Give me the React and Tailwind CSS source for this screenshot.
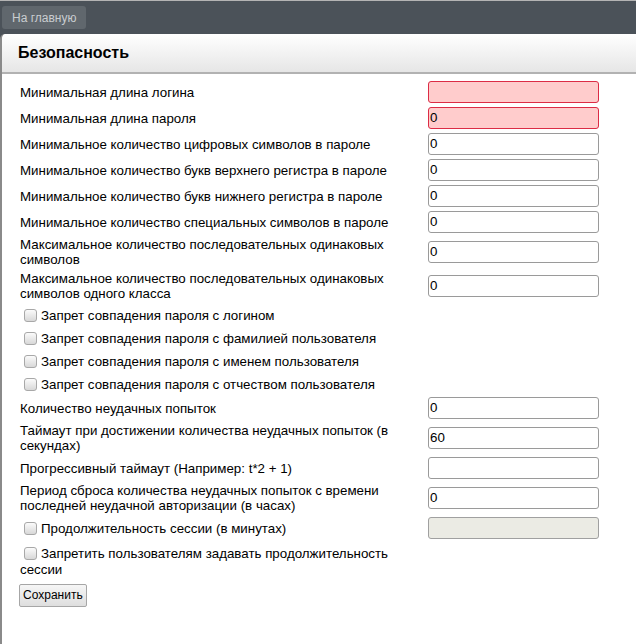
import React from "react";

const Checkbox = () => (
  <span className="inline-block w-[13px] h-[13px] rounded-[3px] border border-[#a8a8a8] bg-gradient-to-b from-[#fbfbfb] to-[#d8d8d8] align-[-2px] mr-[4px] shrink-0" />
);

const TextInput = ({ value = "", invalid = false, disabled = false }) => (
  <div
    className={
      "w-[171px] h-[22px] rounded-[3px] border flex items-center pl-[1px] text-[13.33px] leading-none text-black " +
      (invalid
        ? "border-[#dc2c45] bg-[#ffcccc]"
        : disabled
        ? "border-[#a0a0a0] bg-[#ebebe4]"
        : "border-[#9a9a9a] bg-white")
    }
  >
    {value}
  </div>
);

const Row = ({ label, value, invalid, two }) => (
  <div className={"flex items-center " + (two ? "h-[34px]" : "h-[26px]")}>
    <div className="w-[408px] pr-[10px] text-[13.33px] leading-[15px] text-black">{label}</div>
    <TextInput value={value} invalid={invalid} />
  </div>
);

const CheckRow = ({ label }) => (
  <div className="flex items-center h-[23px] pt-[2px] pl-[4px] text-[13.33px] leading-[15px] text-black">
    <Checkbox />
    <span>{label}</span>
  </div>
);

export default function App() {
  return (
    <div
      className="w-[636px] h-[644px] bg-[#4b5259] flex flex-col overflow-hidden"
      style={{ fontFamily: '"Liberation Sans", Arial, sans-serif' }}
    >
      <div className="h-[1px] bg-[#b4b4b4]" />
      <div className="h-[33px] flex items-start pt-[5px] pl-[2px]">
        <div className="h-[23px] px-[10px] rounded-[3px] bg-[#60676d] text-[#c9cdd0] text-[12px] flex items-center">
          На главную
        </div>
      </div>
      <div className="flex-1 bg-white border-l-2 border-[#8a8a8a] rounded-tl-[5px] flex flex-col">
        <div className="h-[40px] bg-gradient-to-b from-white to-[#e6e6e6] border-b-2 border-[#b2b2b2] rounded-tl-[5px] flex items-center pl-[16px]">
          <span className="text-[16px] font-bold text-black">Безопасность</span>
        </div>
        <div className="pl-[18px] pt-[5px] flex flex-col">
          <Row label="Минимальная длина логина" value="" invalid />
          <Row label="Минимальная длина пароля" value="0" invalid />
          <Row label="Минимальное количество цифровых символов в пароле" value="0" />
          <Row label="Минимальное количество букв верхнего регистра в пароле" value="0" />
          <Row label="Минимальное количество букв нижнего регистра в пароле" value="0" />
          <Row label="Минимальное количество специальных символов в пароле" value="0" />
          <Row label="Максимальное количество последовательных одинаковых символов" value="0" two />
          <Row label="Максимальное количество последовательных одинаковых символов одного класса" value="0" two />
          <CheckRow label="Запрет совпадения пароля с логином" />
          <CheckRow label="Запрет совпадения пароля с фамилией пользователя" />
          <CheckRow label="Запрет совпадения пароля с именем пользователя" />
          <CheckRow label="Запрет совпадения пароля с отчеством пользователя" />
          <Row label="Количество неудачных попыток" value="0" />
          <Row label="Таймаут при достижении количества неудачных попыток (в секундах)" value="60" two />
          <Row label="Прогрессивный таймаут (Например: t*2 + 1)" value="" />
          <Row label="Период сброса количества неудачных попыток с времени последней неудачной авторизации (в часах)" value="0" two />
          <div className="flex items-center h-[26px]">
            <div className="w-[408px] pl-[4px] text-[13.33px] leading-[15px] text-black flex items-center">
              <Checkbox />
              <span>Продолжительность сессии (в минутах)</span>
            </div>
            <TextInput disabled />
          </div>
          <div className="w-[408px] pr-[10px] pt-[5px] text-[13.33px] leading-[16px] text-black">
            <span className="ml-[4px]"><Checkbox /></span>Запретить пользователям задавать продолжительность сессии
          </div>
          <div className="pt-[4px] -ml-[1px]">
            <div className="inline-flex items-center h-[23px] px-[3px] border border-[#a6a6a6] rounded-[2px] bg-gradient-to-b from-[#f6f6f6] to-[#dedede] text-[12px] text-black">
              Сохранить
            </div>
          </div>
        </div>
      </div>
    </div>
  );
}
